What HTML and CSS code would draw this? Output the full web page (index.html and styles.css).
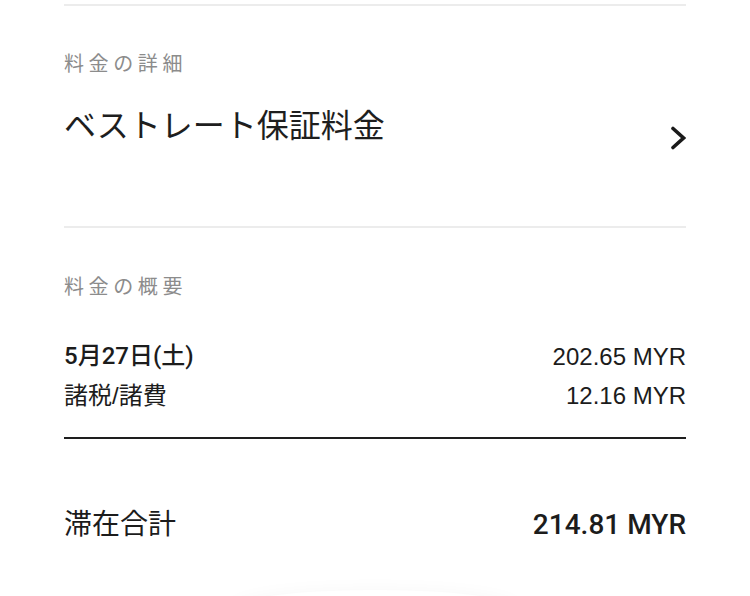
FILE: index.html
```html
<!DOCTYPE html>
<html lang="ja">
<head>
  <meta charset="UTF-8">
  <title>料金の詳細</title>
  <link rel="stylesheet" href="styles.css">
</head>
<body>
  <div class="page">
    <section class="block detail">
      <h2 class="label">料金の詳細</h2>
      <div class="rate-row">
        <span class="rate-name">ベストレート保証料金</span>
        <svg class="chevron" width="18" height="24" viewBox="0 0 18 24">
          <path d="M5 2.5 L15.5 12 L5 21.5" fill="none" stroke="#1a1a1a" stroke-width="3.6" stroke-linecap="round"/>
        </svg>
      </div>
    </section>

    <section class="block summary">
      <h2 class="label">料金の概要</h2>
      <div class="line-item">
        <span class="date">5月27日(土)</span>
        <span>202.65 MYR</span>
      </div>
      <div class="line-item">
        <span>諸税/諸費</span>
        <span>12.16 MYR</span>
      </div>
    </section>

    <section class="total">
      <span>滞在合計</span>
      <span class="total-amount">214.81 MYR</span>
    </section>

    <div class="cta-shadow"></div>
  </div>
</body>
</html>
```

FILE: styles.css
```css
body {
  margin: 0;
  background: #ffffff;
  color: #222;
  font-family: "Liberation Sans", "Noto Sans CJK JP", sans-serif;
  overflow: hidden;
}
.page {
  padding: 4px 64px 0;
}
.block {
  border-top: 2px solid #ececec;
}
.label {
  margin: 0;
  font-size: 20px;
  line-height: 28px;
  font-weight: 400;
  letter-spacing: 4.6px;
  color: #8c8c8c;
}
.detail {
  padding: 44px 0 76px;
}
.rate-row {
  display: flex;
  justify-content: space-between;
  align-items: flex-start;
  margin-top: 26px;
}
.rate-name {
  font-size: 32px;
  line-height: 44px;
  color: #1e1e1e;
}
.chevron {
  margin-top: 22px;
}
.summary {
  padding: 45px 0 22px;
  border-bottom: 2px solid #1e1e1e;
}
.summary .label {
  margin-bottom: 36px;
}
.line-item {
  display: flex;
  justify-content: space-between;
  font-size: 24px;
  line-height: 39px;
  color: #1c1c1c;
}
.date {
  font-family: Roboto, "Noto Sans CJK JP", sans-serif;
  font-weight: 500;
}
.total {
  display: flex;
  justify-content: space-between;
  padding-top: 66px;
  font-size: 28px;
  line-height: 40px;
  color: #1c1c1c;
}
.total-amount {
  font-family: Roboto, "Liberation Sans", sans-serif;
  font-weight: 500;
}
.cta-shadow {
  width: 290px;
  height: 40px;
  margin: 45px auto 0;
  border-radius: 50%;
  box-shadow: 0 0 18px rgba(0, 0, 0, 0.035);
}
```
